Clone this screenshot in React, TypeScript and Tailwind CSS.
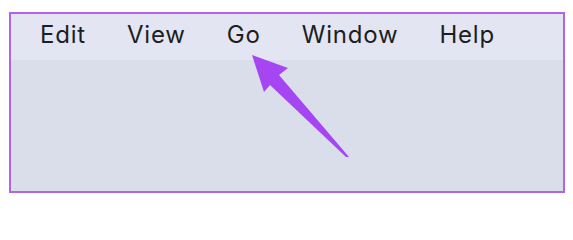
const menus = ["Edit", "View", "Go", "Window", "Help"];

export default function App() {
  return (
    <div className="w-[573px] h-[204px] bg-white pt-[12px] pl-[9px]">
      <div className="relative w-[556px] h-[181px] border-2 border-[#b065e8] bg-[#d9deea] flex flex-col">
        {/* menu bar */}
        <div
          className="h-[46px] bg-[#e3e6f2] flex items-center gap-[41px] pl-[29px] pb-[5px] text-[24px] tracking-[0.8px] text-[#1c1e24]"
          style={{ fontFamily: "Inter, 'Liberation Sans', sans-serif" }}
        >
          {menus.map((m) => (
            <span key={m}>{m}</span>
          ))}
        </div>
        <div className="flex-1" />

        {/* annotation arrow */}
        <svg
          className="absolute left-[-11px] top-[-14px] pointer-events-none"
          width="573"
          height="204"
          viewBox="0 0 573 204"
        >
          <polygon
            points="252,55 288,68 279,75 349,157 346,157 270,85 264,92"
            fill="#a646f2"
          />
        </svg>
      </div>
    </div>
  );
}
